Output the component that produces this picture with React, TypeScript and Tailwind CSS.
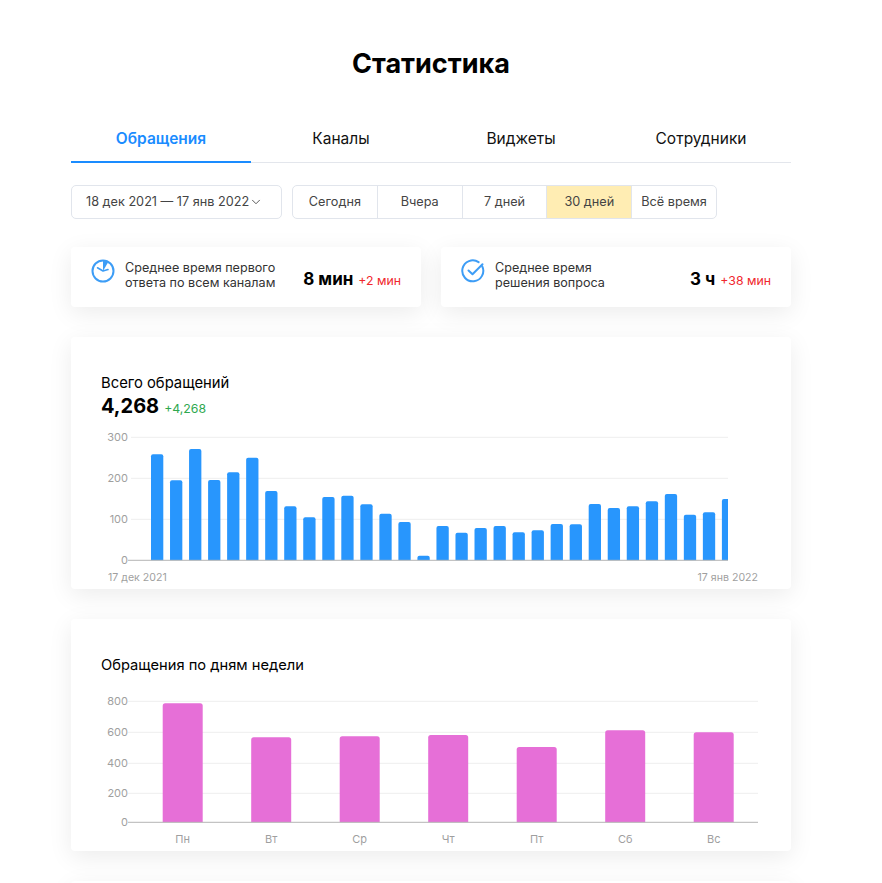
import { ChevronDown } from 'lucide-react';

const TABS = ['Обращения', 'Каналы', 'Виджеты', 'Сотрудники'];
const RANGES = ['Сегодня', 'Вчера', '7 дней', '30 дней', 'Всё время'];

// bar tops are read straight off the picture, so they stay in page pixels
const TOTAL_TOPS = [
  454.3, 480.3, 449, 480, 472.3, 457.7, 491, 506.3, 517.3, 497, 495.7, 504.3, 513.7, 522, 555.7,
  526, 532.7, 528, 526, 532.3, 530.3, 524, 524.3, 504, 508, 506.3, 501.3, 494, 514.7, 512.3, 499,
];
const WEEK = [
  { day: 'Пн', top: 703.3 },
  { day: 'Вт', top: 737.3 },
  { day: 'Ср', top: 736.3 },
  { day: 'Чт', top: 735 },
  { day: 'Пт', top: 747 },
  { day: 'Сб', top: 730.3 },
  { day: 'Вс', top: 732.3 },
];

function topRoundedBar(x: number, top: number, width: number, bottom: number, r: number) {
  return `M${x} ${bottom}V${top + r}Q${x} ${top} ${x + r} ${top}H${x + width - r}Q${x + width} ${top} ${x + width} ${top + r}V${bottom}Z`;
}

function ClockIcon() {
  return (
    <svg width="24" height="24" viewBox="0 0 24 24" fill="none" className="shrink-0">
      <path d="M12 12V2a10 10 0 0 1 5 1.4Z" fill="#3d9df6" />
      <circle cx="12" cy="12" r="10.5" stroke="#3d9df6" strokeWidth="2" />
      <path d="M12 12 6.5 8.8M12 12l5-1.4" stroke="#3d9df6" strokeWidth="1.6" strokeLinecap="round" />
    </svg>
  );
}

function CheckIcon() {
  return (
    <svg width="24" height="24" viewBox="0 0 24 24" fill="none" className="shrink-0">
      <path
        d="M21.2 7.2A10.5 10.5 0 1 1 17.6 3.1"
        stroke="#3d9df6"
        strokeWidth="2"
        strokeLinecap="round"
      />
      <path d="m7.5 11.5 4 3.7 10-10" stroke="#3d9df6" strokeWidth="2" strokeLinecap="round" strokeLinejoin="round" />
    </svg>
  );
}

function StatCard({
  icon,
  lines,
  value,
  delta,
}: {
  icon: React.ReactNode;
  lines: string[];
  value: string;
  delta: string;
}) {
  return (
    <div className="flex h-[60px] w-[350px] rounded bg-white pl-5 pr-5 pt-[12px] shadow-[0_6px_24px_rgba(0,0,0,0.08)]">
      {icon}
      <div className="ml-[10px] pt-[0.5px] text-[12.6px] leading-[15px] text-[#333]">
        {lines.map((l) => (
          <div key={l}>{l}</div>
        ))}
      </div>
      <div className="ml-auto mt-[8px] flex items-baseline gap-[5px] self-start whitespace-nowrap">
        <span className="text-[17px] font-bold leading-[24px] text-black">{value}</span>
        <span className="text-[12.3px] text-[#f0282d]">{delta}</span>
      </div>
    </div>
  );
}

function TotalChart() {
  const grid = [437.3, 478.3, 519.3];
  const ticks = [
    { y: 437.3, label: '300' },
    { y: 478.3, label: '200' },
    { y: 519.3, label: '100' },
    { y: 560.3, label: '0' },
  ];
  return (
    <svg width="660" height="164" viewBox="101 425 660 164" className="mt-[6px] block">
      {grid.map((y) => (
        <line key={y} x1="131" x2="728" y1={y} y2={y} stroke="#eeeeee" />
      ))}
      {ticks.map((t) => (
        <text key={t.y} x="128" y={t.y + 4} textAnchor="end" fontSize="11" fill="#9f9f9f">
          {t.label}
        </text>
      ))}
      <clipPath id="total-clip">
        <rect x="130" y="430" width="598" height="131" />
      </clipPath>
      <g clipPath="url(#total-clip)">
        {TOTAL_TOPS.map((top, i) => (
          <path key={i} d={topRoundedBar(151 + i * 19.03, top, 12.3, 560.3, 2)} fill="#2896fd" />
        ))}
      </g>
      <line x1="128" x2="728" y1="560.3" y2="560.3" stroke="#b5b5b5" />
      <text x="108" y="581" fontSize="10.6" fill="#9f9f9f">
        17 дек 2021
      </text>
      <text x="758" y="581" textAnchor="end" fontSize="10.6" fill="#9f9f9f">
        17 янв 2022
      </text>
    </svg>
  );
}

function WeekChart() {
  const ticks = [
    { y: 701.3, label: '800' },
    { y: 732.3, label: '600' },
    { y: 763.3, label: '400' },
    { y: 793.3, label: '200' },
    { y: 822.3, label: '0' },
  ];
  return (
    <svg width="660" height="161" viewBox="101 690 660 161" className="mt-[15px] block">
      {ticks.slice(0, 4).map((t) => (
        <line key={t.y} x1="128" x2="758" y1={t.y} y2={t.y} stroke="#eeeeee" />
      ))}
      {ticks.map((t) => (
        <text key={t.y} x="128" y={t.y + 4} textAnchor="end" fontSize="11" fill="#9f9f9f">
          {t.label}
        </text>
      ))}
      {WEEK.map((d, i) => (
        <g key={d.day}>
          <path d={topRoundedBar(162.7 + i * 88.5, d.top, 40, 822.3, 2.5)} fill="#e66fd7" />
          <text x={182.7 + i * 88.5} y="843" textAnchor="middle" fontSize="11" fill="#9f9f9f">
            {d.day}
          </text>
        </g>
      ))}
      <line x1="128" x2="758" y1="822.3" y2="822.3" stroke="#b5b5b5" />
    </svg>
  );
}

export default function App() {
  return (
    <div className="h-[883px] overflow-hidden bg-white font-['Inter',sans-serif] text-black">
      <div className="ml-[71px] w-[720px]">
        <h1 className="pt-[46px] text-center text-[27px] font-bold leading-[36px]">Статистика</h1>

        <div className="mt-[37px] flex h-[44px] border-b border-[#e3e6ec]">
          {TABS.map((tab, i) => (
            <div
              key={tab}
              className={`flex h-[44px] w-[180px] items-center justify-center text-[15.5px] ${
                i === 0
                  ? 'border-b-2 border-[#1a8cff] pb-[3px] font-semibold text-[#1a8cff]'
                  : 'pb-[5px] text-[#111]'
              }`}
            >
              {tab}
            </div>
          ))}
        </div>

        <div className="mt-[22px] flex gap-[10px]">
          <div className="flex h-[34px] w-[211px] items-center justify-between rounded-[5px] border border-[#e1e5ec] pl-[14px] pr-[18px] text-[12.7px] text-[#444]">
            <span className="whitespace-nowrap">18 дек 2021 — 17 янв 2022</span>
            <ChevronDown size={14} strokeWidth={1.5} className="shrink-0" />
          </div>
          <div className="flex h-[34px] w-[425px] overflow-hidden rounded-[5px] border border-[#e1e5ec] text-[12.7px] text-[#444]">
            {RANGES.map((r, i) => (
              <div
                key={r}
                className={`flex flex-1 items-center justify-center whitespace-nowrap ${
                  i > 0 ? 'border-l border-[#e1e5ec]' : ''
                } ${r === '30 дней' ? 'bg-[#ffedb3]' : ''}`}
              >
                {r}
              </div>
            ))}
          </div>
        </div>

        <div className="mt-[28px] flex gap-5">
          <StatCard
            icon={<ClockIcon />}
            lines={['Среднее время первого', 'ответа по всем каналам']}
            value="8 мин"
            delta="+2 мин"
          />
          <StatCard
            icon={<CheckIcon />}
            lines={['Среднее время', 'решения вопроса']}
            value="3 ч"
            delta="+38 мин"
          />
        </div>

        <div className="mt-[30px] h-[252px] rounded bg-white px-[30px] pt-[36px] shadow-[0_6px_24px_rgba(0,0,0,0.08)]">
          <div className="text-[14.8px] leading-[20px]">Всего обращений</div>
          <div className="flex h-[26px] items-baseline gap-[5px]">
            <span className="text-[20px] font-bold leading-[26px]">4,268</span>
            <span className="text-[12.3px] text-[#2fa84f]">+4,268</span>
          </div>
          <TotalChart />
        </div>

        <div className="mt-[30px] h-[232px] rounded bg-white px-[30px] pt-[36px] shadow-[0_6px_24px_rgba(0,0,0,0.08)]">
          <div className="text-[14.7px] leading-[20px]">Обращения по дням недели</div>
          <WeekChart />
        </div>

        <div className="mt-[30px] h-[232px] rounded bg-white shadow-[0_6px_24px_rgba(0,0,0,0.08)]" />
      </div>
    </div>
  );
}
